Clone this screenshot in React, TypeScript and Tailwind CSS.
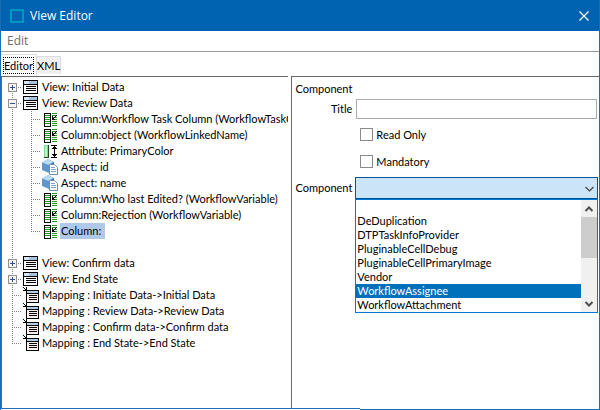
import { useState } from "react"

type IconKind = "view" | "mapping" | "column" | "attribute" | "aspect"

type TreeItem = {
  label: string
  icon: IconKind
  open?: boolean
  children?: TreeItem[]
}

const TREE: TreeItem[] = [
  { label: "View: Initial Data", icon: "view", open: false },
  {
    label: "View: Review Data",
    icon: "view",
    open: true,
    children: [
      { label: "Column:Workflow Task Column (WorkflowTaskC", icon: "column" },
      { label: "Column:object (WorkflowLinkedName)", icon: "column" },
      { label: "Attribute: PrimaryColor", icon: "attribute" },
      { label: "Aspect: id", icon: "aspect" },
      { label: "Aspect: name", icon: "aspect" },
      { label: "Column:Who last Edited? (WorkflowVariable)", icon: "column" },
      { label: "Column:Rejection (WorkflowVariable)", icon: "column" },
      { label: "Column:", icon: "column" },
    ],
  },
  { label: "View: Confirm data", icon: "view", open: false },
  { label: "View: End State", icon: "view", open: false },
  { label: "Mapping : Initiate Data->Initial Data", icon: "mapping" },
  { label: "Mapping : Review Data->Review Data", icon: "mapping" },
  { label: "Mapping : Confirm data->Confirm data", icon: "mapping" },
  { label: "Mapping : End State->End State", icon: "mapping" },
]

const COMPONENTS = [
  "",
  "DeDuplication",
  "DTPTaskInfoProvider",
  "PluginableCellDebug",
  "PluginableCellPrimaryImage",
  "Vendor",
  "WorkflowAssignee",
  "WorkflowAttachment",
]

function ItemIcon({ kind }: { kind: IconKind }) {
  return (
    <svg className="size-4 shrink-0" viewBox="0 0 16 16" shapeRendering="crispEdges" aria-hidden="true">
      {kind === "view" && (
        <>
          <rect x="0" y="1" width="15" height="14" fill="#000" />
          <rect x="1" y="2" width="13" height="3" fill="#a9c4de" />
          <rect x="1" y="2" width="5" height="3" fill="#d6e4f2" />
          <rect x="1" y="6" width="13" height="8" fill="#fff" />
          <path d="M3 7.5h10M3 9.5h10M3 11.5h10" stroke="#000" />
        </>
      )}
      {kind === "mapping" && (
        <>
          <rect x="3" y="3" width="13" height="13" fill="#000" />
          <rect x="4" y="4" width="11" height="2" fill="#b5cfe6" />
          <rect x="4" y="7" width="11" height="8" fill="#fff0f0" />
          <path d="M6 8.5h8M6 10.5h8M6 12.5h8" stroke="#000" />
          <path d="M0 0h1v1h-1zM1 1h1v1h-1zM2 2h1v1h-1zM3 0h1v4h-4v-1h2v-1h1z" fill="#000" />
        </>
      )}
      {kind === "column" && (
        <>
          <rect x="2" y="2" width="7" height="14" fill="#000" />
          <rect x="3" y="3" width="5" height="12" fill="#fff" />
          <path d="M3 4.5h5M3 6.5h5M3 8.5h5M3 10.5h5M3 12.5h5" stroke="#1f9a1f" />
          <path d="M10 2.5h5M10 4.5h5M10 6.5h5M10 8.5h5M10 10.5h5M10 12.5h5M10 14.5h5" stroke="#1f9a1f" />
          <path d="M10 5h1v2h1v-1h1v-1h1v-1h1v1h-1v1h-1v1h-1v1h1v1h-3z" fill="#000" />
        </>
      )}
      {kind === "attribute" && (
        <>
          <rect x="2" y="2" width="5" height="13" fill="#1d4a24" />
          <rect x="2" y="2" width="4" height="12" fill="#7fd88f" />
          <rect x="3" y="3" width="2" height="11" fill="#b9f5c3" />
          <path d="M9 2.5h6M9 14.5h6" stroke="#000" />
          <path d="M12 3h1v1h1v1h1v1h-2v5h2v1h-1v1h-1v1h-1v-1h-1v-1h-1v-1h2v-5h-2v-1h1v-1h1z" fill="#000" />
        </>
      )}
      {kind === "aspect" && (
        <g shapeRendering="auto">
          <path d="M0 3.5 6 0l6 3v7l-5 4-7-3z" fill="#5f97cc" />
          <path d="M0 3.5 6 0l6 3-5 3z" fill="#b9d8f2" />
          <path d="M7 6l5-3v7l-5 4z" fill="#3c74ad" />
          <path d="M7.5 5.5h5l3 3v7h-8z" fill="#fff" stroke="#6c8fb5" />
          <path d="M9 8.500h4M9 10.500h5M9 12.500h5" stroke="#7ea6d3" />
        </g>
      )}
    </svg>
  )
}

// one 16px cell of the dotted guide lines, with the expander box if the item has one
function Branch({ open, first, last }: { open?: boolean; first?: boolean; last?: boolean }) {
  return (
    <svg className="h-4 w-4 shrink-0" viewBox="0 0 16 16" shapeRendering="crispEdges" aria-hidden="true">
      <path
        d={`M5.5 ${first ? 8 : 0}V${last ? 9 : 16}M5 8.5h10`}
        stroke="#808080"
        strokeDasharray="1 1"
        fill="none"
      />
      {open !== undefined && (
        <>
          <rect x="1.5" y="4.5" width="8" height="8" fill="#f4f4f4" stroke="#919191" />
          <path d={open ? "M3 8.5h5" : "M3 8.5h5M5.5 6v5"} stroke="#30509c" />
        </>
      )}
    </svg>
  )
}

function Guide() {
  return (
    <svg className="h-4 w-[19px] shrink-0" viewBox="0 0 19 16" shapeRendering="crispEdges" aria-hidden="true">
      <path d="M5.5 0v16" stroke="#808080" strokeDasharray="1 1" />
    </svg>
  )
}

function Tree() {
  const [expanded, setExpanded] = useState<Record<string, boolean>>({ "View: Review Data": true })
  const [selected, setSelected] = useState("Column:")

  const renderLabel = (item: TreeItem) => (
    <button
      type="button"
      onClick={() => setSelected(item.label)}
      className={
        "h-4 pl-px pr-1 whitespace-nowrap " + (selected === item.label ? "bg-[#b0c8ea]" : "")
      }
    >
      {item.label}
    </button>
  )

  return (
    <ul className="pt-0.5 pl-[5px]">
      {TREE.map((item, index) => {
        const isOpen = item.open === undefined ? undefined : !!expanded[item.label]
        return (
          <li key={item.label}>
            <div
              className="flex h-4"
              onDoubleClick={() => setExpanded((prev) => ({ ...prev, [item.label]: !prev[item.label] }))}
            >
              <Branch open={isOpen} first={index === 0} last={index === TREE.length - 1} />
              <ItemIcon kind={item.icon} />
              <span className="flex pl-0.5">{renderLabel(item)}</span>
            </div>
            {isOpen && item.children && (
              <ul>
                {item.children.map((child, i) => (
                  <li key={child.label} className="flex h-4">
                    <Guide />
                    <Branch last={i === item.children!.length - 1} />
                    <ItemIcon kind={child.icon} />
                    <span className="flex pl-0.5">{renderLabel(child)}</span>
                  </li>
                ))}
                <li className="flex h-4">
                  <Guide />
                </li>
              </ul>
            )}
          </li>
        )
      })}
    </ul>
  )
}

function ComponentSelect() {
  const [value, setValue] = useState("")
  const [active, setActive] = useState("WorkflowAssignee")

  return (
    <div className="relative">
      <select
        id="component"
        value={value}
        onChange={(e) => setValue(e.target.value)}
        className="block h-[22px] w-full appearance-none border border-[#005499] bg-[#cce4f7] px-1 outline-none"
      >
        {COMPONENTS.map((name) => (
          <option key={name} value={name}>{name}</option>
        ))}
      </select>
      <svg className="absolute top-2 right-1 h-2 w-[9px] pointer-events-none" viewBox="0 0 9 8" aria-hidden="true">
        <path d="M.5 2l4 4 4-4" fill="none" stroke="#444" strokeWidth="1.2" />
      </svg>
      <div className="absolute top-full inset-x-0 flex border border-[#0078d7] bg-white">
        <ul role="listbox" aria-label="Component" className="flex-1">
          {COMPONENTS.map((name) => (
            <li
              key={name}
              role="option"
              aria-selected={active === name}
              onMouseEnter={() => setActive(name)}
              onClick={() => setValue(name)}
              className={
                "h-[14px] pl-px leading-[14px] " + (active === name ? "bg-[#0070ba] text-white" : "")
              }
            >
              {name}
            </li>
          ))}
        </ul>
        <div className="flex w-4 flex-col items-center bg-[#f0f0f0]">
          <svg className="h-[17px] w-4" viewBox="0 0 16 17" aria-hidden="true">
            <path d="M4.5 11l3.500-3.500 3.500 3.500" fill="none" stroke="#505050" strokeWidth="2" />
          </svg>
          <div className="h-[41px] w-full bg-[#cdcdcd]" />
          <div className="flex-1" />
          <svg className="h-[17px] w-4" viewBox="0 0 16 17" aria-hidden="true">
            <path d="M4.500 7l3.500 3.500 3.500-3.500" fill="none" stroke="#505050" strokeWidth="2" />
          </svg>
        </div>
      </div>
    </div>
  )
}

function CheckField({ label }: { label: string }) {
  const [checked, setChecked] = useState(false)
  return (
    <label className="col-start-2 flex h-[27px] items-center gap-[3px] pl-[5px]">
      <input
        type="checkbox"
        checked={checked}
        onChange={(e) => setChecked(e.target.checked)}
        className="size-[13px] appearance-none border border-[#8a8a8a] bg-white checked:bg-[#0070ba]"
      />
      {label}
    </label>
  )
}

export default function App() {
  const [title, setTitle] = useState("")

  return (
    <div className="flex min-h-screen flex-col border-x border-[#1a6fb5] bg-white text-[11px] leading-4 text-black font-['Lato',sans-serif]">
      <header className="flex h-[31px] items-center bg-[#0063b1] pl-[9px] pr-[10px] text-[12px] font-['Open_Sans',sans-serif] text-white">
        <svg className="size-[14px]" viewBox="0 0 14 14" aria-hidden="true">
          <rect x="1" y="1" width="12" height="12" fill="none" stroke="#00a9c4" strokeWidth="1.500" />
        </svg>
        <h1 className="flex-1 pl-1.5">View Editor</h1>
        <button type="button" aria-label="Close">
          <svg className="size-[10px]" viewBox="0 0 10 10" aria-hidden="true">
            <path d="M.5.5l9 9M9.500.5l-9 9" stroke="#fff" strokeWidth="1.200" />
          </svg>
        </button>
      </header>

      <nav className="flex h-[21px] items-center border-b border-[#999] pl-1.5 text-[12px] font-['Open_Sans',sans-serif] text-[#6d6d6d]">
        <button type="button">Edit</button>
      </nav>

      <div role="tablist" className="flex h-6 items-end">
        <button
          type="button"
          role="tab"
          aria-selected="true"
          className="h-[22px] border-t border-r border-[#dcdcdc] px-0.5 pt-0.5 pb-0.5"
        >
          <span className="flex h-[17px] items-center border border-dotted border-black leading-4">Editor</span>
        </button>
        <button
          type="button"
          role="tab"
          aria-selected="false"
          className="mb-0.5 h-[18px] border-t border-r border-[#dcdcdc] bg-[#f0f0f0]"
        >
          XML
        </button>
      </div>

      <main className="grid flex-1 grid-cols-[287fr_307fr] gap-[3px]">
        <section className="min-w-0 overflow-hidden border-t border-l border-[#696969]">
          <Tree />
        </section>

        <section className="min-w-0 border-t border-l border-[#696969] pt-1 pl-[3px] pr-px">
          <h2>Component</h2>
          <form className="grid grid-cols-[auto_1fr] items-center gap-x-[3px] pt-0.5">
            <label htmlFor="title" className="text-right">Title</label>
            <input
              id="title"
              type="text"
              value={title}
              onChange={(e) => setTitle(e.target.value)}
              className="mx-px h-5 min-w-0 border border-[#ababab] px-1 outline-none"
            />
            <div className="col-start-2 pt-0.5 pb-0.5">
              <CheckField label="Read Only" />
              <CheckField label="Mandatory" />
            </div>
            <label htmlFor="component">Component</label>
            <ComponentSelect />
          </form>
        </section>
      </main>

      <footer className="flex h-0.5">
        <div className="w-3/5 border-t border-[#1a6fb5]" />
        <div className="w-2/5 border-b border-[#1a6fb5]" />
      </footer>
    </div>
  )
}
